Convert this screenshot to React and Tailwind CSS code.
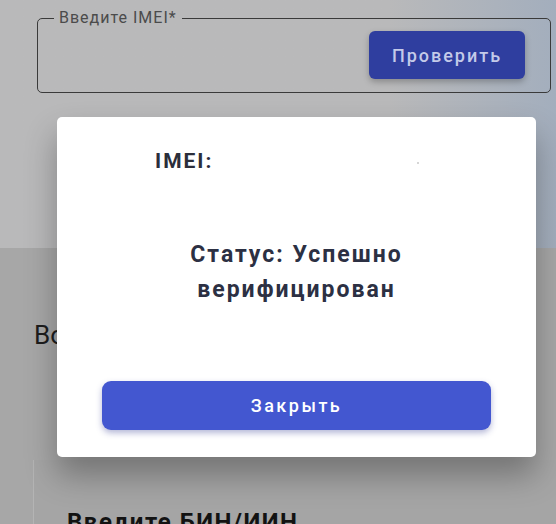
import React from 'react';

const roboto = { fontFamily: 'Roboto, "Noto Sans", sans-serif' };

function ResultModal() {
  return (
    <div className="absolute left-[57px] top-[117px] flex h-[340px] w-[479px] flex-col rounded-[5px] bg-white shadow-[0_18px_32px_rgba(0,0,0,0.3)]">
      <div className="relative mt-[30px] pl-[98px]">
        <p className="text-[21px] font-bold leading-[28px] tracking-[2px] text-[#2b2e3b]">IMEI:</p>
        <span className="absolute left-[360px] top-[15px] h-[2px] w-[2px] rounded-full bg-[#c9c9c9]" />
      </div>
      <p className="mt-[62px] text-center text-[23px] font-bold leading-[35px] tracking-[2px] text-[#2c3043]">
        Статус: Успешно
        <br />
        верифицирован
      </p>
      <div className="mt-auto mb-[27px] px-[45px]">
        <button className="h-[49px] w-full rounded-[9px] bg-[#4357d0] text-[18px] font-medium tracking-[2.5px] text-white shadow-[0_3px_6px_rgba(40,50,140,0.35)]">
          Закрыть
        </button>
      </div>
    </div>
  );
}

export default function App() {
  return (
    <div className="relative h-[524px] w-full overflow-hidden bg-[#a6a6a6]" style={roboto}>
      <section className="h-[248px] bg-linear-to-r from-[#b9b9ba] from-70% to-[#a3aebd] pt-[9px] pl-[37px] pr-[5px]">
        <fieldset className="flex justify-end rounded-[5px] border-[1.5px] border-[#3a3a3a] pt-[4px] pb-[13px] pr-[25px]">
          <legend className="ml-[16px] px-[5px] text-[16px] leading-[18px] tracking-[1px] text-[#4b4b4b]">Введите IMEI*</legend>
          <button className="h-[48px] w-[156px] rounded-[6px] bg-[#2f3e9f] text-[18px] font-medium tracking-[2px] text-[#c4cae9] shadow-[0_3px_6px_rgba(0,0,0,0.25)]">
            Проверить
          </button>
        </fieldset>
      </section>

      <div className="bg-[#a7a7a7] pl-[33px] pt-[72px]">
        <h2 className="pl-px text-[26px] leading-[30px] text-[#1d1d1d]">Во</h2>
        <div className="mt-[110px] h-[200px] border-l border-[#b4b4b4] bg-[#a5a5a5] pl-[33px] pt-[47px]">
          <h3 className="text-[24px] font-bold leading-[30px] tracking-[1.5px] text-[#121212]">Введите БИН/ИИН</h3>
        </div>
      </div>

      <ResultModal />
    </div>
  );
}
